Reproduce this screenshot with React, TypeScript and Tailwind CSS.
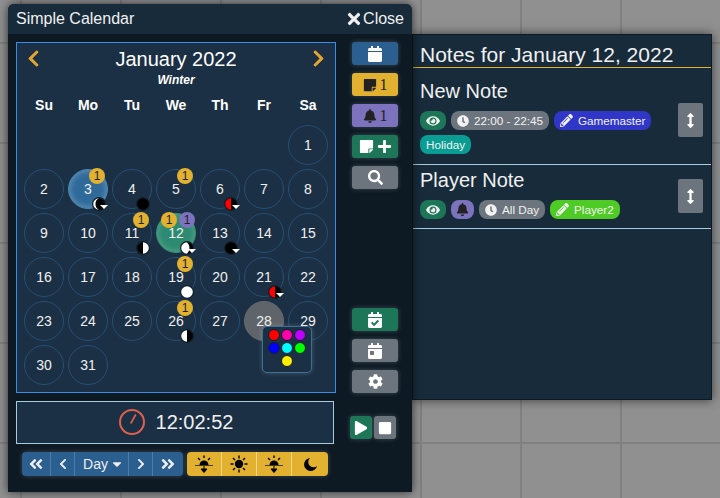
import {
  FaAngleDoubleLeft,
  FaAngleDoubleRight,
  FaArrowsAltV,
  FaBell,
  FaCalendar,
  FaCalendarCheck,
  FaCalendarDay,
  FaCaretDown,
  FaChevronLeft,
  FaChevronRight,
  FaClock,
  FaCog,
  FaEye,
  FaPencilAlt,
  FaPlay,
  FaPlus,
  FaSearch,
  FaStickyNote,
  FaStop,
  FaTimes,
} from "react-icons/fa";

type Phase = "new" | "full" | "first" | "last" | "crescent" | "red" | "gibbous";

interface Day {
  n: number;
  notes?: number;
  reminders?: number;
  moon?: Phase;
  caret?: boolean;
  state?: "today" | "selected" | "hover";
}

const days: Day[] = [
  { n: 1 },
  { n: 2 },
  { n: 3, notes: 1, moon: "crescent", caret: true, state: "today" },
  { n: 4, moon: "new" },
  { n: 5, notes: 1 },
  { n: 6, moon: "red", caret: true },
  { n: 7 },
  { n: 8 },
  { n: 9 },
  { n: 10 },
  { n: 11, notes: 1, moon: "first" },
  { n: 12, notes: 1, reminders: 1, moon: "gibbous", caret: true, state: "selected" },
  { n: 13, moon: "new", caret: true },
  { n: 14 },
  { n: 15 },
  { n: 16 },
  { n: 17 },
  { n: 18 },
  { n: 19, notes: 1, moon: "full" },
  { n: 20 },
  { n: 21, moon: "red", caret: true },
  { n: 22 },
  { n: 23 },
  { n: 24 },
  { n: 25 },
  { n: 26, notes: 1, moon: "last" },
  { n: 27 },
  { n: 28, state: "hover" },
  { n: 29 },
  { n: 30 },
  { n: 31 },
];

const weekdays = ["Su", "Mo", "Tu", "We", "Th", "Fr", "Sa"];

const swatches = [
  "bg-[#ff0000]",
  "bg-[#ff00aa]",
  "bg-[#bb00ff]",
  "bg-[#0000ff]",
  "bg-[#00ffff]",
  "bg-[#00ff00]",
  "bg-[#ffee00]",
];

function Moon({ phase, caret }: { phase: Phase; caret?: boolean }) {
  return (
    <span className="absolute left-[23px] top-[27px] h-[14px] w-[14px]">
      <svg viewBox="0 0 14 14" className="h-[14px] w-[14px]">
        <circle cx="7" cy="7" r="7" fill="#13202c" />
        <circle cx="7" cy="7" r="5.8" fill={phase === "full" ? "#fff" : "#000"} />
        {phase === "first" && <path d="M7 1.2a5.8 5.8 0 0 1 0 11.6z" fill="#fff" />}
        {phase === "last" && <path d="M7 1.2a5.8 5.8 0 0 0 0 11.6z" fill="#fff" />}
        {phase === "red" && <path d="M7 1.2a5.8 5.8 0 0 0 0 11.6z" fill="#ff0000" />}
        {phase === "crescent" && <path d="M7 1.2a5.8 5.8 0 0 0 0 11.6a6.5 6.5 0 0 1 0-11.6z" fill="#fff" />}
        {phase === "gibbous" && <path d="M7 1.2a5.8 5.8 0 0 0 0 11.6a8 8 0 0 0 0-11.6z" fill="#fff" />}
      </svg>
      {caret && (
        <span className="absolute left-[8px] top-[8px] h-0 w-0 border-x-[4px] border-t-[4px] border-x-transparent border-t-white" />
      )}
    </span>
  );
}

function CountBadge({ value, purple }: { value: number; purple?: boolean }) {
  return (
    <span
      className={`flex h-4 w-4 items-center justify-center rounded-full text-[12px] leading-none text-[#222] ${
        purple ? "bg-[#7c72bd]" : "bg-[#e2b12f]"
      }`}
    >
      {value}
    </span>
  );
}

function DayCell({ day }: { day: Day }) {
  const tone =
    day.state === "today"
      ? "border-[#4a86b5] bg-[#2f6a9b] shadow-[inset_0_0_6px_rgba(255,255,255,0.35)]"
      : day.state === "selected"
        ? "border-[#3a9078] bg-[#2d8a70] shadow-[inset_0_0_6px_rgba(255,255,255,0.25)]"
        : day.state === "hover"
          ? "border-[#666a6e] bg-[#5e6469]"
          : "border-[#264f73]";
  return (
    <div
      className={`relative flex h-10 w-10 items-center justify-center rounded-full border text-[14px] leading-[12px] text-[#f0f0f0] ${tone}`}
    >
      {day.n}
      {(day.notes || day.reminders) && (
        <span className={`absolute -top-[2px] flex gap-[2px] ${day.reminders ? "left-[4px]" : "left-[20px]"}`}>
          {day.notes && <CountBadge value={day.notes} />}
          {day.reminders && <CountBadge value={day.reminders} purple />}
        </span>
      )}
      {day.moon && <Moon phase={day.moon} caret={day.caret} />}
    </div>
  );
}

function SideButton({ className, children }: { className: string; children: React.ReactNode }) {
  return (
    <button
      className={`flex h-[23px] w-[46px] items-center justify-center gap-[3px] rounded-[3px] shadow-[0_0_5px_rgba(255,255,255,0.2)] ${className}`}
    >
      {children}
    </button>
  );
}

function SunsetIcon() {
  return (
    <svg viewBox="0 0 20 20" className="h-[20px] w-[20px]" fill="#000" stroke="#000">
      <path d="M5.5 11a4.5 4.5 0 0 1 9 0z" stroke="none" />
      <path d="M1 11.5h18" strokeWidth="1" stroke="#4a3a10" />
      <path d="M10 1.5v2.5M4 4l2 2M16 4l-2 2" strokeWidth="1.4" />
      <path d="M10 12v3M7 15l3 3.5 3-3.5z" strokeWidth="1" />
    </svg>
  );
}

function SunIcon() {
  return (
    <svg viewBox="0 0 20 20" className="h-[20px] w-[20px]" fill="#000" stroke="#000">
      <circle cx="10" cy="10" r="4.2" stroke="none" />
      <path d="M10 1.5v3M10 15.5v3M1.5 10h3M15.5 10h3M4 4l2 2M16 4l-2 2M4 16l2-2M16 16l-2-2" strokeWidth="1.4" />
    </svg>
  );
}

function MoonIcon() {
  return (
    <svg viewBox="0 0 16 16" className="h-[15px] w-[15px]" fill="#000">
      <path d="M7.5 1a7 7 0 1 0 7.5 8.5a4.8 4.8 0 0 1-7.5-8.5z" />
    </svg>
  );
}

function Pill({ className, children }: { className: string; children: React.ReactNode }) {
  return (
    <span
      className={`flex h-[19px] items-center gap-[5px] rounded-[8px] px-[6px] text-[11.7px] ${className}`}
    >
      {children}
    </span>
  );
}

function SortButton() {
  return (
    <button className="flex h-[34px] w-[25px] items-center justify-center rounded-[2px] bg-[#6c757d] text-white">
      <FaArrowsAltV size={15} />
    </button>
  );
}

export default function App() {
  return (
    <div className="relative h-[498px] w-[720px] overflow-hidden bg-[#909090] bg-[linear-gradient(#808080_0_2px,transparent_2px),linear-gradient(90deg,#808080_0_2px,transparent_2px)] bg-[size:100px_100px] bg-[position:20px_42px] font-['Liberation_Sans',Arial,sans-serif]">
      {/* notes window */}
      <div className="absolute left-[412px] top-[34px] h-[366px] w-[300px] border border-[#0d1a24] bg-[#172b3b] text-[#f0f0f0] shadow-[0_0_10px_rgba(0,0,0,0.6)]">
        <h2 className="h-[33px] border-b border-[#e2b12f] pl-[7px] pt-[7px] text-[21px] leading-[25px]">
          Notes for January 12, 2022
        </h2>
        <div className="flex h-[97px] justify-between border-b border-[#a9cbe0] pl-[7px] pr-2">
          <div className="w-[245px] pt-[11px]">
            <h3 className="text-[20px] leading-[24px]">New Note</h3>
            <div className="mt-2 flex flex-wrap gap-[5px]">
              <Pill className="bg-[#1d7657] text-[#f2f2f2]">
                <FaEye size={14} />
              </Pill>
              <Pill className="bg-[#6c757d] text-[#f2f2f2]">
                <FaClock size={12} />
                22:00 - 22:45
              </Pill>
              <Pill className="bg-[#2f36c8] text-[#f2f2f2]">
                <FaPencilAlt size={13} />
                Gamemaster
              </Pill>
              <Pill className="h-5 rounded-[6px] bg-[#0a9d93] text-[#f2f2f2]">Holiday</Pill>
            </div>
          </div>
          <div className="pt-[35px]">
            <SortButton />
          </div>
        </div>
        <div className="flex h-[64px] justify-between border-b border-[#a9cbe0] pl-[7px] pr-2">
          <div className="w-[245px] pt-[3px]">
            <h3 className="text-[20px] leading-[24px]">Player Note</h3>
            <div className="mt-2 flex flex-wrap gap-[5px]">
              <Pill className="bg-[#1d7657] text-[#f2f2f2]">
                <FaEye size={14} />
              </Pill>
              <Pill className="w-[23px] justify-center bg-[#7c72bd] text-[#222]">
                <FaBell size={13} className="shrink-0" />
              </Pill>
              <Pill className="bg-[#6c757d] text-[#f2f2f2]">
                <FaClock size={12} />
                All Day
              </Pill>
              <Pill className="bg-[#4fcb25] text-[#f2f2f2]">
                <FaPencilAlt size={13} />
                Player2
              </Pill>
            </div>
          </div>
          <div className="pt-[14px]">
            <SortButton />
          </div>
        </div>
      </div>

      {/* calendar window */}
      <div className="absolute left-2 top-1 h-[488px] w-[404px] rounded-t-[6px] bg-[#0d1a24] text-white shadow-[0_0_10px_rgba(0,0,0,0.7)]">
        <header className="flex h-[30px] items-center justify-between rounded-t-[6px] bg-[#172b3b] pl-2 pr-[8px] text-[16px] text-[#f0f0f0]">
          <span>Simple Calendar</span>
          <span className="flex items-center">
            <FaTimes size={18} />
            Close
          </span>
        </header>

        <div className="flex pl-2 pt-2">
          <div className="h-[351px] w-[320px] border border-[#3b8dea] bg-[#1b3044] px-[7px]">
            <div className="flex h-[31px] items-center justify-between">
              <FaChevronLeft size={19} className="text-[#e2a52f]" />
              <span className="text-[20px]">January 2022</span>
              <FaChevronRight size={19} className="text-[#e2a52f]" />
            </div>
            <div className="text-center text-[12px] font-bold italic leading-[12px]">Winter</div>
            <div className="mt-[11px] grid grid-cols-[repeat(7,40px)] gap-x-1 text-center text-[14px] font-bold leading-[16px]">
              {weekdays.map((w) => (
                <span key={w}>{w}</span>
              ))}
            </div>
            <div className="relative mt-3 grid grid-cols-[repeat(7,40px)] gap-1">
              {Array.from({ length: 6 }).map((_, i) => (
                <span key={i} />
              ))}
              {days.map((d) => (
                <DayCell key={d.n} day={d} />
              ))}
              {/* colour picker open on day 28 */}
              <div className="absolute left-[238px] top-[201px] flex h-[47px] w-[50px] flex-wrap content-start justify-center gap-[1px] rounded-[5px] border border-[#3f6f94] bg-[#1b3044] pt-[2px] shadow-[0_0_5px_rgba(255,255,255,0.2)]">
                {swatches.map((s) => (
                  <span key={s} className={`h-3 w-3 rounded-full border border-[#13202c] ${s}`} />
                ))}
              </div>
            </div>
          </div>

          <div className="ml-4 flex h-[351px] flex-col justify-between">
            <div className="flex flex-col gap-2">
              <SideButton className="bg-[#2a5f8f] text-white">
                <FaCalendar size={16} />
              </SideButton>
              <SideButton className="bg-[#e2b12f] font-['Liberation_Serif',serif] text-[16px] text-[#222]">
                <FaStickyNote size={14} />1
              </SideButton>
              <SideButton className="bg-[#7c72bd] font-['Liberation_Serif',serif] text-[16px] text-[#222]">
                <FaBell size={14} />1
              </SideButton>
              <SideButton className="gap-[2px] bg-[#1d7657] text-white">
                <FaStickyNote size={15} />
                <FaPlus size={15} />
              </SideButton>
              <SideButton className="bg-[#6c757d] text-white">
                <FaSearch size={15} />
              </SideButton>
            </div>
            <div className="flex flex-col gap-2">
              <SideButton className="bg-[#1d7657] text-white">
                <FaCalendarCheck size={16} />
              </SideButton>
              <SideButton className="bg-[#6c757d] text-white">
                <FaCalendarDay size={16} />
              </SideButton>
              <SideButton className="bg-[#6c757d] text-white">
                <FaCog size={15} />
              </SideButton>
            </div>
          </div>
        </div>

        <div className="flex pl-2 pt-2">
          <div className="w-[318px]">
            <div className="flex h-[43px] items-center justify-center gap-[11px] border border-[#a9cbe0] bg-[#1b3044] pb-[1px] pl-[2px] text-[20px] text-[#f0f0f0]">
              <svg viewBox="0 0 26 26" className="h-[26px] w-[26px]" fill="none" stroke="#e0604e" strokeWidth="2">
                <circle cx="13" cy="13" r="12" />
                <path d="M12 14l4.5-8" strokeLinecap="round" strokeWidth="1.6" />
              </svg>
              12:02:52
            </div>
            <div className="mt-2 flex gap-1 pl-[6px]">
              <div className="flex h-6 w-[161px] items-center rounded-[4px] bg-[#2a5f8f] text-[14px] text-[#eee] shadow-[0_0_5px_rgba(255,255,255,0.2)]">
                <span className="flex h-6 w-[29px] items-center justify-center border-r border-[#4d7da6]">
                  <FaAngleDoubleLeft size={16} />
                </span>
                <span className="flex h-6 w-6 items-center justify-center border-r border-[#4d7da6]">
                  <FaChevronLeft size={12} />
                </span>
                <span className="flex h-6 w-[54px] items-center justify-center gap-[2px] border-r border-[#4d7da6] pl-[4px]">
                  Day <FaCaretDown size={14} />
                </span>
                <span className="flex h-6 w-6 items-center justify-center border-r border-[#4d7da6]">
                  <FaChevronRight size={12} />
                </span>
                <span className="flex h-6 w-[30px] items-center justify-center">
                  <FaAngleDoubleRight size={16} />
                </span>
              </div>
              <div className="flex h-6 w-[141px] items-center rounded-[4px] bg-[#e2b12f] text-black shadow-[0_0_5px_rgba(255,255,255,0.2)]">
                <span className="flex h-6 w-[35px] items-center justify-center border-r border-[#f0d78a]">
                  <SunsetIcon />
                </span>
                <span className="flex h-6 w-[35px] items-center justify-center border-r border-[#f0d78a]">
                  <SunIcon />
                </span>
                <span className="flex h-6 w-[35px] items-center justify-center border-r border-[#f0d78a]">
                  <SunsetIcon />
                </span>
                <span className="flex h-6 w-[36px] items-center justify-center">
                  <MoonIcon />
                </span>
              </div>
            </div>
          </div>
          <div className="ml-[16px] mt-[15px] flex h-[23px] gap-[2px]">
            <button className="flex h-[23px] w-[22px] items-center justify-center rounded-[3px] bg-[#1d7657] text-white shadow-[0_0_5px_rgba(255,255,255,0.2)]">
              <FaPlay size={14} />
            </button>
            <button className="flex h-[23px] w-[22px] items-center justify-center rounded-[3px] bg-[#6c757d] text-white shadow-[0_0_5px_rgba(255,255,255,0.2)]">
              <FaStop size={14} />
            </button>
          </div>
        </div>
      </div>
    </div>
  );
}
